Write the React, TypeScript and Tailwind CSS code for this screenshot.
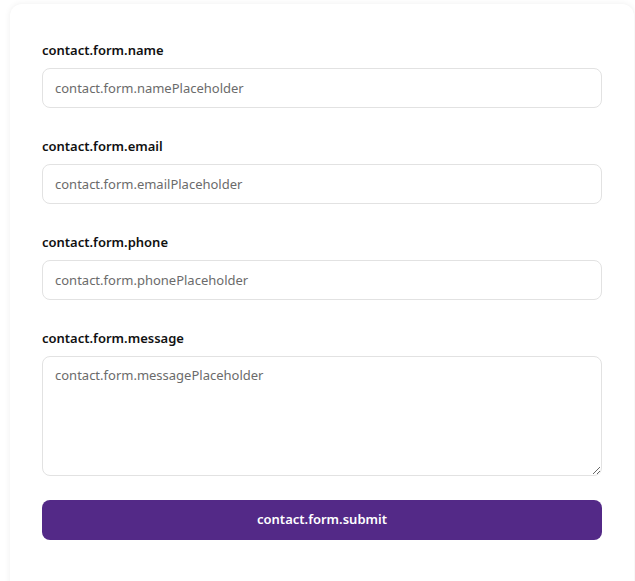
import React from "react";

const fields = [
  { label: "contact.form.name", ph: "contact.form.namePlaceholder" },
  { label: "contact.form.email", ph: "contact.form.emailPlaceholder" },
  { label: "contact.form.phone", ph: "contact.form.phonePlaceholder" },
];

export default function App() {
  return (
    <div className="min-h-[581px] bg-white pl-[10px] pr-[1px] pt-1" style={{ fontFamily: '"Noto Sans", "Open Sans", sans-serif' }}>
      <div className="rounded-xl bg-white shadow-[0_0_6px_rgba(0,0,0,0.07)] px-8 pt-9 pb-10 h-[600px]">
        <form className="flex flex-col" onSubmit={(e) => e.preventDefault()}>
          {fields.map((f) => (
            <div key={f.label} className="mb-7">
              <label className="block text-[13px] leading-5 font-semibold text-[#111111] mb-2">{f.label}</label>
              <input
                className="block w-full h-10 rounded-lg border border-[#e2e2e2] px-3 text-[13px] text-[#222] placeholder:text-[#6b6b6b] outline-none"
                placeholder={f.ph}
              />
            </div>
          ))}
          <div className="mb-6">
            <label className="block text-[13px] leading-5 font-semibold text-[#111111] mb-2">contact.form.message</label>
            <textarea
              className="block w-full h-[120px] rounded-lg border border-[#e2e2e2] px-3 py-2 text-[13px] leading-5 text-[#222] placeholder:text-[#6b6b6b] outline-none resize-y"
              placeholder="contact.form.messagePlaceholder"
            />
          </div>
          <button type="submit" className="h-10 w-full rounded-lg bg-[#532987] text-white text-[13px] font-semibold">
            contact.form.submit
          </button>
        </form>
      </div>
    </div>
  );
}
